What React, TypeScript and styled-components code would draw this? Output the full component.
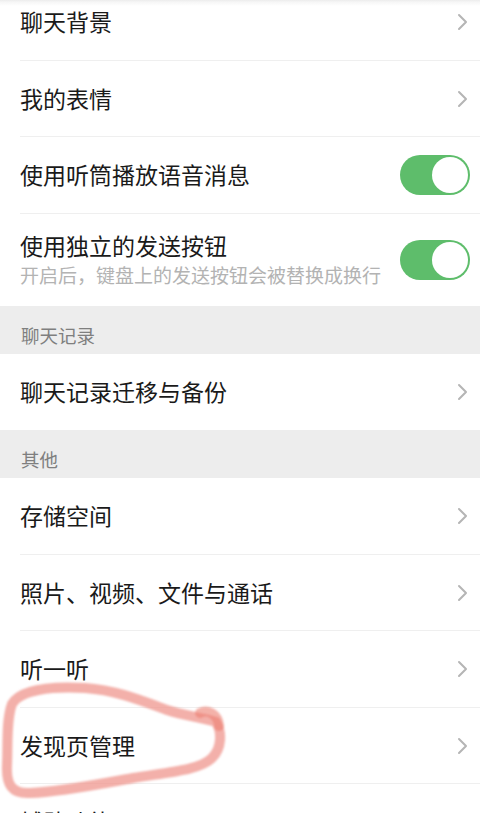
import React from 'react';
import styled, { createGlobalStyle } from 'styled-components';

const GlobalStyle = createGlobalStyle`
  html, body {
    margin: 0;
    padding: 0;
    background: #ffffff;
  }
  body {
    font-family: 'Noto Sans CJK SC', 'Noto Sans', sans-serif;
    -webkit-font-smoothing: antialiased;
  }
`;

const Screen = styled.div`
  position: relative;
  width: 480px;
  height: 813px;
  overflow: hidden;
  background: #ffffff;
`;

const TopEdge = styled.div`
  position: absolute;
  top: 0;
  left: 0;
  right: 0;
  height: 6px;
  background: linear-gradient(#ececec 0, #f6f6f6 2px, rgba(255, 255, 255, 0) 6px);
  z-index: 2;
`;

const List = styled.div`
  display: flex;
  flex-direction: column;
  margin-top: -16px;
`;

const Row = styled.div<{ $tall?: boolean; $last?: boolean }>`
  box-sizing: border-box;
  height: ${(p) => (p.$tall ? '92px' : '76.5px')};
  flex-shrink: 0;
  display: flex;
  align-items: center;
  padding: 0 10px 2px 20px;
  position: relative;
  background: #ffffff;

  &::after {
    content: '';
    display: ${(p) => (p.$last ? 'none' : 'block')};
    position: absolute;
    left: 20px;
    right: 0;
    bottom: 0;
    height: 1px;
    background: #efefef;
  }
`;

const Texts = styled.div`
  flex: 1;
  display: flex;
  flex-direction: column;
  gap: 4px;
`;

const Title = styled.div`
  font-size: 23px;
  line-height: 28px;
  color: #1a1a1a;
`;

const Sub = styled.div`
  font-size: 19px;
  line-height: 24px;
  color: #b3b3b3;
`;

const SectionHeader = styled.div`
  box-sizing: border-box;
  height: 48px;
  flex-shrink: 0;
  display: flex;
  align-items: flex-end;
  padding: 0 20px 9px 21px;
  background: #ededed;
  font-size: 18.5px;
  line-height: 20px;
  color: #7f7f7f;
`;

const Chevron = styled.svg`
  width: 11px;
  height: 18px;
  margin: 2px 2px 0 0;
  flex-shrink: 0;
`;

const Toggle = styled.div<{ $on: boolean }>`
  box-sizing: border-box;
  width: 70px;
  height: 40px;
  margin-top: 2px;
  border-radius: 20px;
  background: ${(p) => (p.$on ? '#5ebd6b' : '#e5e5e5')};
  display: flex;
  align-items: center;
  justify-content: ${(p) => (p.$on ? 'flex-end' : 'flex-start')};
  padding: 2px;
  flex-shrink: 0;
`;

const Knob = styled.div`
  width: 36px;
  height: 36px;
  border-radius: 50%;
  background: #ffffff;
`;

const Annotation = styled.svg`
  position: absolute;
  top: 0;
  left: 0;
  width: 480px;
  height: 813px;
  pointer-events: none;
  z-index: 3;
`;

const Arrow = () => (
  <Chevron viewBox="0 0 11 18">
    <path d="M2 2 L9 9 L2 16" fill="none" stroke="#b5b5b5" strokeWidth="2" strokeLinecap="round" strokeLinejoin="round" />
  </Chevron>
);

type Item =
  | { kind: 'link'; title: string; last?: boolean }
  | { kind: 'switch'; title: string; sub?: string; on: boolean; last?: boolean }
  | { kind: 'header'; title: string };

const items: Item[] = [
  { kind: 'link', title: '聊天背景' },
  { kind: 'link', title: '我的表情' },
  { kind: 'switch', title: '使用听筒播放语音消息', on: true },
  { kind: 'switch', title: '使用独立的发送按钮', sub: '开启后，键盘上的发送按钮会被替换成换行', on: true, last: true },
  { kind: 'header', title: '聊天记录' },
  { kind: 'link', title: '聊天记录迁移与备份', last: true },
  { kind: 'header', title: '其他' },
  { kind: 'link', title: '存储空间' },
  { kind: 'link', title: '照片、视频、文件与通话' },
  { kind: 'link', title: '听一听' },
  { kind: 'link', title: '发现页管理' },
  { kind: 'link', title: '辅助功能' },
];

export default function App() {
  return (
    <Screen>
      <GlobalStyle />
      <TopEdge />
      <List>
        {items.map((it, i) => {
          if (it.kind === 'header') return <SectionHeader key={i}>{it.title}</SectionHeader>;
          if (it.kind === 'switch')
            return (
              <Row key={i} $tall={!!it.sub} $last={it.last}>
                <Texts>
                  <Title>{it.title}</Title>
                  {it.sub && <Sub>{it.sub}</Sub>}
                </Texts>
                <Toggle $on={it.on}>
                  <Knob />
                </Toggle>
              </Row>
            );
          return (
            <Row key={i} $last={it.last}>
              <Texts>
                <Title>{it.title}</Title>
              </Texts>
              <Arrow />
            </Row>
          );
        })}
      </List>
      <Annotation viewBox="0 0 480 813">
        <defs>
          <filter id="soft" x="-10%" y="-10%" width="120%" height="120%">
            <feGaussianBlur stdDeviation="0.8" />
          </filter>
        </defs>
        <g filter="url(#soft)" fill="none" strokeLinecap="round" strokeLinejoin="round">
          <path
            d="M216 722 C222 732, 222 748, 212 758 C200 770, 170 772, 133 778 C100 784, 60 792, 30 793 C12 794, 6 785, 7 765 C8 745, 6 720, 12 704 C20 690, 50 686, 85 688 C115 690, 140 700, 167 710 C185 716, 205 718, 216 722"
            stroke="#ef9a92"
            strokeOpacity="0.78"
            strokeWidth="10"
          />
          <path d="M200 713 C208 709, 218 714, 219 726" stroke="#ec7f72" strokeOpacity="0.6" strokeWidth="10" />
        </g>
      </Annotation>
    </Screen>
  );
}
